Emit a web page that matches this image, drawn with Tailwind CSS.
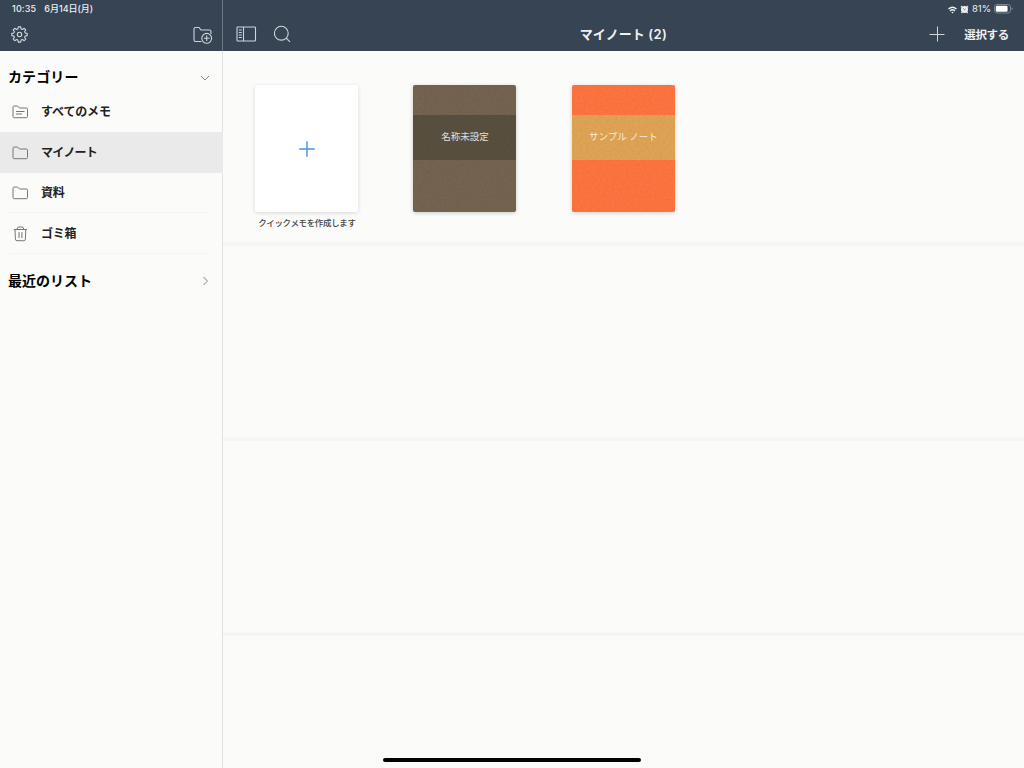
<!DOCTYPE html>
<html lang="ja">
<head>
<meta charset="utf-8">
<title>マイノート</title>
<script src="https://cdn.jsdelivr.net/npm/@tailwindcss/browser@4"></script>
</head>
<body class="relative flex h-[768px] w-[1024px] overflow-hidden bg-[#fbfbf9] font-['Inter','Noto_Sans_CJK_JP',sans-serif] text-[#222]">
<svg class="absolute size-0" aria-hidden="true"><defs>
  <filter id="cloth" x="0" y="0" width="100%" height="100%"><feTurbulence type="fractalNoise" baseFrequency="0.35 0.5" numOctaves="2" seed="3"/><feColorMatrix values="0 0 0 0 0  0 0 0 0 0  0 0 0 0 0  0.5 0 0 0 -0.18"/></filter>
</defs></svg>
<aside class="flex w-[223px] shrink-0 flex-col border-r border-[#e2e2e1]">
  <header class="-mr-px flex h-[51px] shrink-0 flex-col border-r border-[#6c7784] bg-[#364454] text-[#eef0f2]">
    <div class="flex h-[18px] items-center gap-[8px] pl-[12px] text-[9px] leading-[18px] font-medium whitespace-nowrap"><span class="tracking-[0.15px]">10:35</span><span>6月14日(月)</span></div>
    <div class="flex h-[33px] items-center justify-between pr-[9px] pl-[11px]">
      <svg class="size-[17px]" viewBox="0 0 17 17" fill="none" stroke="#d3d8dd" stroke-width="1.100" stroke-linejoin="round"><path d="M7.300 .9h2.400l.4 2 1.300.6 1.800-1.200 1.600 1.600-1.200 1.800.6 1.300 2 .4v2.200l-2 .4-.6 1.300 1.200 1.800-1.600 1.600-1.800-1.200-1.300.6-.4 2H7.300l-.4-2-1.300-.6-1.800 1.200-1.600-1.600 1.200-1.800-.6-1.300-2-.4V7.400l2-.4.6-1.300-1.200-1.800 1.600-1.600 1.800 1.200 1.300-.6z"/><circle cx="8.500" cy="8.500" r="2.200"/></svg>
      <svg class="h-[18px] w-[20px]" viewBox="0 0 20 18" fill="none" stroke="#cfd5da" stroke-width="1.100"><path d="M8.500 15.500H2.500Q1 15.500 1 14V3Q1 1.500 2.500 1.500H6L8 4H16.500Q18 4 18 5.500V8"/><circle cx="13.700" cy="12.300" r="4.900"/><path d="M13.700 9.500v5.600M10.900 12.300h5.600"/></svg>
    </div>
  </header>
  <nav class="flex flex-col">
    <div class="flex h-[40px] items-center justify-between pt-[12px] pr-[12px] pl-[8px]">
      <h2 class="text-[14px] leading-[28px] font-bold tracking-[0.1px] text-black">カテゴリー</h2>
      <svg class="mt-[2px] h-[8px] w-[10px]" viewBox="0 0 10 8" fill="none" stroke="#858585" stroke-width="1"><path d="M1 2l4 4 4-4"/></svg>
    </div>
    <a class="flex h-[41px] items-center gap-[12px] pl-[12px]">
      <svg class="h-[16px] w-[17px]" viewBox="0 0 17 16" fill="none" stroke="#777" stroke-width="1"><path d="M1 12.500V3.200Q1 2 2.200 2H5.500L7.500 4H14.300Q15.500 4 15.500 5.200V12.500Q15.500 13.700 14.300 13.700H2.200Q1 13.700 1 12.500zM4 7.500h8.500M4 10h6"/></svg>
      <span class="text-[12px] leading-[20px] font-bold tracking-[-0.15px]">すべてのメモ</span>
    </a>
    <a class="-mr-px flex h-[41px] items-center gap-[12px] bg-[#eaeaea] pl-[12px]">
      <svg class="h-[16px] w-[17px]" viewBox="0 0 17 16" fill="none" stroke="#777" stroke-width="1"><path d="M1 12.500V3.200Q1 2 2.200 2H5.500L7.500 4H14.300Q15.500 4 15.500 5.200V12.500Q15.500 13.700 14.300 13.700H2.200Q1 13.700 1 12.500z"/></svg>
      <span class="text-[12px] leading-[20px] font-bold tracking-[-0.8px]">マイノート</span>
    </a>
    <a class="mr-[13px] ml-[9px] flex h-[40px] items-center gap-[12px] border-b border-[#f4f4f2] pl-[3px]">
      <svg class="h-[16px] w-[17px]" viewBox="0 0 17 16" fill="none" stroke="#777" stroke-width="1"><path d="M1 12.500V3.200Q1 2 2.200 2H5.500L7.500 4H14.300Q15.500 4 15.500 5.200V12.500Q15.500 13.700 14.300 13.700H2.200Q1 13.700 1 12.500z"/></svg>
      <span class="text-[12px] leading-[20px] font-bold tracking-[-0.2px]">資料</span>
    </a>
    <a class="mr-[13px] ml-[9px] flex h-[41px] items-center gap-[12px] border-b border-[#f4f4f2] pt-px pl-[3px]">
      <svg class="h-[16px] w-[17px]" viewBox="0 0 17 16" fill="none" stroke="#777" stroke-width="1"><path d="M1.800 3.500h13.200M5 3.300Q5.200 1 6.800 1h3.200Q11.600 1 11.800 3.300M3 3.500l.4 9.700Q3.500 14.700 5 14.700h6.800Q13.300 14.700 13.400 13.200L13.800 3.500M7 6v6M9.900 6v6"/></svg>
      <span class="text-[12px] leading-[20px] font-bold tracking-[-0.2px]">ゴミ箱</span>
    </a>
    <div class="mt-[13px] flex h-[28px] items-center justify-between pr-[13px] pl-[8px]">
      <h2 class="text-[14px] leading-[28px] font-bold text-black">最近のリスト</h2>
      <svg class="h-[10px] w-[8px]" viewBox="0 0 8 10" fill="none" stroke="#858585" stroke-width="1"><path d="M2.500 1l4 4-4 4"/></svg>
    </div>
  </nav>
</aside>
<main class="flex min-w-0 flex-1 flex-col">
  <header class="flex h-[51px] shrink-0 flex-col bg-[#364454] text-[#eef0f2]">
    <div class="flex h-[18px] items-center justify-end gap-[3px] pr-[11px] text-[9.500px] leading-[18px]">
      <svg class="mt-px h-[8px] w-[9px]" viewBox="0 0 9 8" fill="none" stroke="#eef0f2" stroke-width="1.300"><path d="M.5 3Q4.500-.6 8.500 3M2 4.900Q4.500 2.700 7 4.900"/><path d="M3.300 6.200Q4.500 5.200 5.700 6.200L4.500 7.500z" fill="#eef0f2" stroke="none"/></svg>
      <svg class="h-[9px] w-[9px]" viewBox="0 0 9 9"><path d="M.9 2.300L2.300.9M8.100 2.300L6.700.9M2.200 7L1.400 8.100M6.800 7l.8 1.100" stroke="#eef0f2" stroke-width="1.200"/><circle cx="4.500" cy="4.600" r="3.500" fill="#eef0f2"/><path d="M3.200 3.500l1.300 1.300 1.200-.8" stroke="#364454" stroke-width=".7" fill="none"/></svg>
      <span>81%</span>
      <svg class="h-[10px] w-[19px]" viewBox="0 0 19 10"><rect x=".5" y=".5" width="16" height="8.500" rx="2.500" fill="none" stroke="#8a949e" stroke-width=".8"/><rect x="1.800" y="1.800" width="11.800" height="6" rx="1.300" fill="#fff"/><path d="M17.700 3.200v3q1-.5 1-1.500t-1-1.500" fill="#8a949e"/></svg>
    </div>
    <div class="grid h-[32px] grid-cols-[1fr_auto_1fr] items-center pr-[15px] pl-[13px]">
      <div class="flex items-center gap-[16px]">
        <svg class="h-[16px] w-[21px]" viewBox="0 0 21 16" fill="none" stroke="#cfd5da" stroke-width="1.100"><rect x="1" y="1" width="18.500" height="14" rx=".7"/><path d="M7.500 1v14M2.800 4h3M2.800 6.500h3M2.800 9h3M2.800 11.500h3"/></svg>
        <svg class="size-[18px]" viewBox="0 0 18 18" fill="none" stroke="#cfd5da" stroke-width="1.100"><circle cx="8.300" cy="8.200" r="6.900"/><path d="M13.200 13.100l3.800 3.800"/></svg>
      </div>
      <h1 class="pl-[2px] text-[13px] leading-[20px] font-bold whitespace-nowrap"><span>マイノート</span><span class="font-semibold tracking-[0.4px]"> (2)</span></h1>
      <div class="flex items-center justify-end gap-[19px]">
        <svg class="size-[16px]" viewBox="0 0 16 16" stroke="#cfd5da" stroke-width="1"><path d="M8.500 .5v15M.5 8.500h15"/></svg>
        <span class="pt-px text-[11.500px] leading-[20px] font-bold tracking-[-0.3px]">選択する</span>
      </div>
    </div>
  </header>
  <section class="flex h-[195px] shrink-0 items-start gap-[55.500px] bg-[linear-gradient(to_top,#f8f8f6_0px,#f4f4f2_1px,#f4f4f2_2px,#fbfbf9_5px)] pt-[34px] pl-[32.400px]">
    <article class="flex w-[103px] flex-col items-center">
      <div class="flex h-[127px] w-[103px] items-center justify-center rounded-[2px] bg-white shadow-[0_1px_4px_rgba(0,0,0,0.14)]">
        <svg class="size-[16px]" viewBox="0 0 16 16" stroke="#4595dc" stroke-width="1.400"><path d="M8 .3v15.400M.3 8h15.400"/></svg>
      </div>
      <p class="mt-[4px] text-[8.500px] leading-[14px] font-medium tracking-[-0.35px] whitespace-nowrap text-[#444]">クイックメモを作成します</p>
    </article>
    <article class="relative -ml-[0.500px] h-[127px] w-[103px] overflow-hidden rounded-[2px] bg-[#73634f] pt-[30px] shadow-[0_1px_4px_rgba(0,0,0,0.2)]">
      <div class="flex h-[45px] items-center justify-center bg-[#594f3f] text-[9.500px] text-[#e4e1dd]">名称未設定</div>
      <svg class="absolute inset-0 size-full opacity-15"><rect width="100%" height="100%" filter="url(#cloth)"/></svg>
    </article>
    <article class="relative h-[127px] w-[103px] overflow-hidden rounded-[2px] bg-[#fc743f] pt-[30px] shadow-[0_1px_4px_rgba(0,0,0,0.18)]">
      <div class="flex h-[45px] items-center justify-center bg-[#dea354] text-[9.500px] text-[#fbefdc]">サンプル ノート</div>
      <svg class="absolute inset-0 size-full opacity-15"><rect width="100%" height="100%" filter="url(#cloth)"/></svg>
    </article>
  </section>
  <section class="h-[195px] shrink-0 bg-[linear-gradient(to_top,#f8f8f6_0px,#f4f4f2_1px,#f4f4f2_2px,#fbfbf9_5px)]"></section>
  <section class="h-[195px] shrink-0 bg-[linear-gradient(to_top,#f8f8f6_0px,#f4f4f2_1px,#f4f4f2_2px,#fbfbf9_5px)]"></section>
  <section class="flex-1"></section>
</main>
<div class="absolute top-[758px] left-[383px] h-[4px] w-[258px] rounded-full bg-black"></div>
</body>
</html>
